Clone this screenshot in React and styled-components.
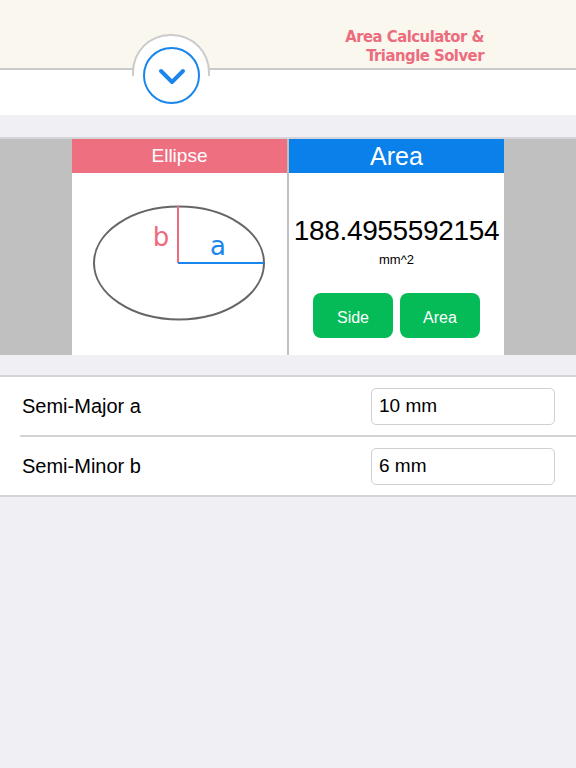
import React from 'react';
import styled, { createGlobalStyle } from 'styled-components';

const Global = createGlobalStyle`
  html, body { margin: 0; padding: 0; }
  body {
    background: #efeff4;
    font-family: "Liberation Sans", Arial, sans-serif;
  }
`;

const Page = styled.div`
  width: 576px;
  min-height: 768px;
  background: #efeff4;
`;

const Header = styled.div`
  position: relative;
  height: 68px;
  background: #faf7ef;
  border-bottom: 2px solid #cbcbcb;
`;

const Title = styled.div`
  position: absolute;
  right: 92px;
  top: 27px;
  text-align: right;
  color: #ec6c7e;
  font-family: "DejaVu Sans Condensed", "DejaVu Sans", sans-serif;
  font-weight: bold;
  font-size: 16.5px;
  line-height: 19px;
  letter-spacing: -0.5px;
`;

const Bump = styled.div`
  position: absolute;
  left: 132px;
  top: 34px;
  width: 74px;
  height: 40px;
  border: 2px solid #cbcbcb;
  border-bottom: none;
  border-radius: 38px 38px 0 0;
  background: #fff;
`;

const ToggleButton = styled.button`
  position: absolute;
  left: 143px;
  top: 47px;
  width: 57px;
  height: 57px;
  border-radius: 50%;
  border: 2px solid #1a86ec;
  background: #fff;
  padding: 0;
  display: flex;
  align-items: center;
  justify-content: center;
  z-index: 2;
`;

const WhiteBand = styled.div`
  height: 45px;
  background: #fff;
`;

const Spacer = styled.div`
  height: 22px;
`;

const Panel = styled.div`
  display: flex;
  justify-content: center;
  gap: 2px;
  background: #c0c0c0;
  border-top: 2px solid #d4d4d8;
  height: 216px;
`;

const Card = styled.div`
  width: 215px;
  background: #fff;
  display: flex;
  flex-direction: column;
`;

const CardHead = styled.div`
  height: 34px;
  background: ${p => p.$color};
  color: #fff;
  font-size: ${p => p.$size}px;
  display: flex;
  align-items: center;
  justify-content: center;
`;

const Figure = styled.div`
  flex: 1;
  display: flex;
  justify-content: center;
  align-items: flex-start;
  padding-top: 32px;
`;

const Result = styled.div`
  flex: 1;
  display: flex;
  flex-direction: column;
  align-items: center;
  padding-top: 42px;
`;

const Value = styled.div`
  font-size: 28px;
  color: #000;
  letter-spacing: -0.35px;
`;

const Unit = styled.div`
  font-size: 13px;
  margin-top: 5px;
  color: #000;
`;

const Buttons = styled.div`
  display: flex;
  gap: 7px;
  margin-top: 26px;
`;

const GreenButton = styled.button`
  width: 80px;
  height: 45px;
  border: none;
  border-radius: 8px;
  background: #04bb57;
  color: #fff;
  font-family: "Liberation Sans", Arial, sans-serif;
  font-size: 16px;
  padding-top: 6px;
`;

const Rows = styled.div`
  margin-top: 20px;
  background: #fff;
  border-top: 2px solid #d4d4d8;
  border-bottom: 2px solid #d4d4d8;
`;

const Row = styled.div`
  height: 58px;
  display: flex;
  align-items: center;
  justify-content: space-between;
  margin-left: 20px;
  padding: 0 21px 0 2px;
  border-top: ${p => (p.$first ? 'none' : '2px solid #d4d4d8')};
`;

const Label = styled.div`
  font-size: 20px;
  color: #000;
`;

const Field = styled.input`
  box-sizing: border-box;
  width: 184px;
  height: 37px;
  border: 1px solid #cfcfd4;
  border-radius: 5px;
  padding: 0 7px;
  font-family: "Liberation Sans", Arial, sans-serif;
  font-size: 19px;
  color: #000;
  background: #fff;
  outline: none;
`;

function EllipseDrawing() {
  return (
    <svg width="176" height="120" viewBox="0 0 176 120">
      <ellipse cx="87" cy="58" rx="85" ry="56.5" fill="none" stroke="#666" strokeWidth="2" />
      <line x1="86" y1="1" x2="86" y2="58" stroke="#ec6c7e" strokeWidth="2" />
      <line x1="86" y1="58" x2="172" y2="58" stroke="#1a86ec" strokeWidth="2" />
      <text x="69" y="41" fill="#ec6c7e" fontSize="26" textAnchor="middle" fontFamily="'DejaVu Sans', sans-serif">b</text>
      <text x="126" y="50" fill="#1a86ec" fontSize="26" textAnchor="middle" fontFamily="'DejaVu Sans', sans-serif">a</text>
    </svg>
  );
}

export default function App() {
  return (
    <Page>
      <Global />
      <Header>
        <Bump />
        <ToggleButton>
          <svg width="30" height="20" viewBox="0 0 30 20">
            <polyline points="4,5 15,16 26,5" fill="none" stroke="#1a86ec" strokeWidth="4" strokeLinecap="round" strokeLinejoin="round" />
          </svg>
        </ToggleButton>
        <Title>
          Area Calculator &amp;<br />Triangle Solver
        </Title>
      </Header>
      <WhiteBand />
      <Spacer />
      <Panel>
        <Card>
          <CardHead $color="#ee6f7f" $size={19}>Ellipse</CardHead>
          <Figure>
            <EllipseDrawing />
          </Figure>
        </Card>
        <Card>
          <CardHead $color="#0a80ea" $size={25}>Area</CardHead>
          <Result>
            <Value>188.4955592154</Value>
            <Unit>mm^2</Unit>
            <Buttons>
              <GreenButton>Side</GreenButton>
              <GreenButton>Area</GreenButton>
            </Buttons>
          </Result>
        </Card>
      </Panel>
      <Rows>
        <Row $first>
          <Label>Semi-Major a</Label>
          <Field defaultValue="10 mm" />
        </Row>
        <Row>
          <Label>Semi-Minor b</Label>
          <Field defaultValue="6 mm" />
        </Row>
      </Rows>
    </Page>
  );
}
